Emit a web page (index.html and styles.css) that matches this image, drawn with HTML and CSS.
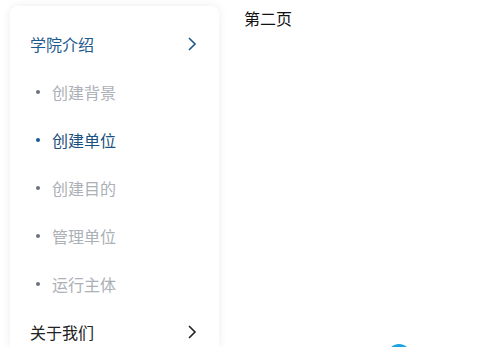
FILE: index.html
```html
<!DOCTYPE html>
<html lang="zh">
<head>
<meta charset="utf-8">
<link rel="stylesheet" href="styles.css">
</head>
<body>
<div class="page">
  <nav class="menu">
    <div class="group-title active-group">
      <span>学院介绍</span>
      <svg class="chev" viewBox="0 0 10 16" width="10" height="16"><path d="M2 2 L8 8 L2 14" fill="none" stroke="currentColor" stroke-width="1.6"/></svg>
    </div>
    <ul class="sub">
      <li class="item">创建背景</li>
      <li class="item current">创建单位</li>
      <li class="item">创建目的</li>
      <li class="item">管理单位</li>
      <li class="item">运行主体</li>
    </ul>
    <div class="group-title">
      <span>关于我们</span>
      <svg class="chev" viewBox="0 0 10 16" width="10" height="16"><path d="M2 2 L8 8 L2 14" fill="none" stroke="currentColor" stroke-width="1.6"/></svg>
    </div>
  </nav>
  <main class="content">第二页</main>
</div>
<div class="float-btn"></div>
</body>
</html>
```
FILE: styles.css
```css
html, body {
  margin: 0;
  padding: 0;
  background: #fff;
  font-family: "Noto Sans CJK SC", "Noto Sans", sans-serif;
  overflow: hidden;
  height: 347px;
}
.page {
  display: flex;
  align-items: flex-start;
  padding: 6px 0 0 10px;
}
.menu {
  width: 209px;
  box-sizing: border-box;
  padding: 14px 22px 0 20px;
  background: #fff;
  border-radius: 8px 8px 0 0;
  box-shadow: 0 0 10px rgba(0,0,0,0.08);
  height: 341px;
  overflow: hidden;
}
.group-title {
  height: 48px;
  display: flex;
  align-items: center;
  justify-content: space-between;
  font-size: 16px;
  color: #222;
}
.group-title.active-group {
  color: #1e5a8e;
}
.chev {
  color: #222;
}
.active-group .chev {
  color: #1e5a8e;
}
.sub {
  list-style: none;
  margin: 0;
  padding: 0;
}
.item {
  height: 48px;
  display: flex;
  align-items: center;
  font-size: 16px;
  color: #acb0b7;
  padding-left: 22px;
  position: relative;
}
.item::before {
  content: "";
  position: absolute;
  left: 6px;
  top: 22px;
  width: 4px;
  height: 4px;
  border-radius: 50%;
  background: #6b7380;
}
.item.current {
  color: #1b4f80;
}
.item.current::before {
  background: #1b5a92;
}
.content {
  margin-left: 25px;
  font-size: 16px;
  line-height: 24px;
  color: #111;
}
.float-btn {
  position: fixed;
  left: 387px;
  top: 344px;
  width: 24px;
  height: 24px;
  border-radius: 50%;
  background: #1ca3e4;
}
```
